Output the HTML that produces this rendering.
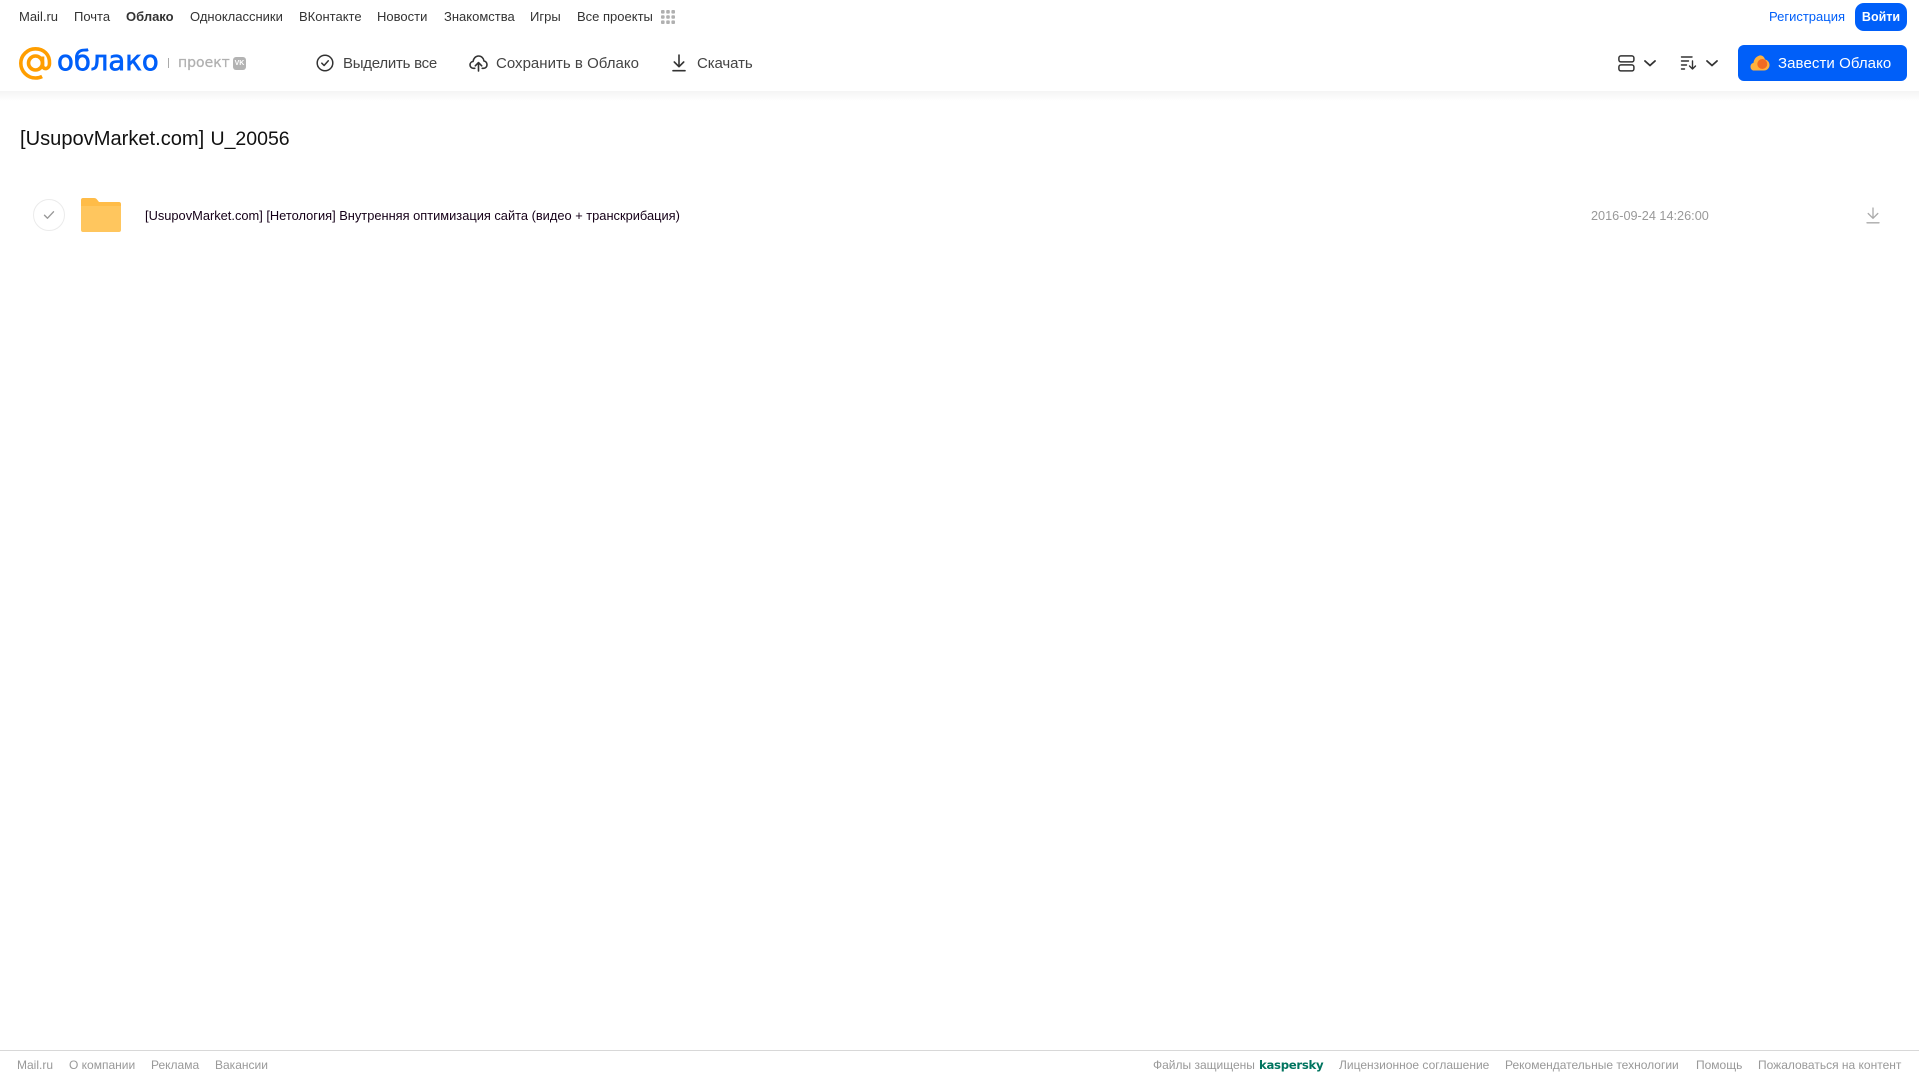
<!DOCTYPE html>
<html lang="ru"><head><meta charset="utf-8"><title>Облако</title>
<style>
html,body{margin:0;padding:0;background:#fff}
body{width:1919px;height:1079px;position:relative;overflow:hidden;font-family:"Liberation Sans",Arial,sans-serif}
.t{position:absolute;white-space:nowrap;line-height:20px}
.n{top:7px;font-size:13px;color:#333}
.b{top:54px;font-size:15px;color:#444}
.f{top:1055px;font-size:12px;color:#999}
svg{position:absolute;overflow:visible}
</style></head><body>
<div style="position:absolute;left:0;top:0;width:1919px;height:91px;background:#fff"></div>
<div style="position:absolute;left:0;top:91px;width:1919px;height:10px;background:linear-gradient(#f4f4f4,#fff)"></div>

<span class="t n" style="left:19px">Mail.ru</span>
<span class="t n" style="left:74px">Почта</span>
<span class="t n" style="left:126px;font-weight:bold">Облако</span>
<span class="t n" style="left:190px">Одноклассники</span>
<span class="t n" style="left:299px">ВКонтакте</span>
<span class="t n" style="left:377px">Новости</span>
<span class="t n" style="left:444px">Знакомства</span>
<span class="t n" style="left:530px">Игры</span>
<span class="t n" style="left:577px">Все проекты</span>
<svg style="left:661px;top:10px" width="14" height="14" fill="#b0b0b0"><rect x="0" y="0" width="3.6" height="3.6" rx="1"/><rect x="5.2" y="0" width="3.6" height="3.6" rx="1"/><rect x="10.4" y="0" width="3.6" height="3.6" rx="1"/><rect x="0" y="5.2" width="3.6" height="3.6" rx="1"/><rect x="5.2" y="5.2" width="3.6" height="3.6" rx="1"/><rect x="10.4" y="5.2" width="3.6" height="3.6" rx="1"/><rect x="0" y="10.4" width="3.6" height="3.6" rx="1"/><rect x="5.2" y="10.4" width="3.6" height="3.6" rx="1"/><rect x="10.4" y="10.4" width="3.6" height="3.6" rx="1"/></svg>

<span class="t n" style="left:1769px;color:#005ff9">Регистрация</span>
<div style="position:absolute;left:1855px;top:3px;width:52px;height:28px;border-radius:9px;background:#005ff9;color:#fff;font-size:12.5px;font-weight:bold;line-height:28px;text-align:center">Войти</div>

<svg style="left:19px;top:47px" width="33" height="33" viewBox="0 0 33 33" fill="none" stroke="#ff9e00" stroke-width="3.6"><circle cx="16.5" cy="16" r="7"/><path d="M23.5 9.5v8.5c0 5 6.800 5 7 -1.500C31 7.500 24.500 1.800 16.500 1.800 8.500 1.800 1.800 8.300 1.800 16.200c0 8 6.500 14.800 14.800 14.800 2.700 0 4.500-.5 6.500-1.500"/></svg>
<span class="t" style="left:57px;top:44px;line-height:34px;font-family:'DejaVu Sans',sans-serif;font-size:27.500px;color:#005ff9;-webkit-text-stroke:.7px #005ff9">облако</span>
<div style="position:absolute;left:168px;top:58px;width:1px;height:10px;background:#aaa"></div>
<span class="t" style="left:178px;top:53px;font-family:'DejaVu Sans',sans-serif;font-size:14px;color:#b0b0b0;-webkit-text-stroke:.25px #b0b0b0">проект</span>
<div style="position:absolute;left:233px;top:57px;width:13px;height:13px;border-radius:3px;background:#b3b3b3;color:#fff;font-size:7px;font-weight:bold;line-height:13px;text-align:center">VK</div>

<svg style="left:316px;top:54px" width="18" height="18" fill="none" stroke="#333" stroke-width="1.500" stroke-linecap="round" stroke-linejoin="round"><circle cx="9" cy="9" r="7.800"/><path d="M5.800 9.200l2.300 2.300 4.200-4.700"/></svg>
<span class="t b" style="left:343px;letter-spacing:-.25px">Выделить все</span>

<svg style="left:469px;top:54px" width="19" height="18" fill="none" stroke="#333" stroke-width="1.600" stroke-linecap="round" stroke-linejoin="round"><path d="M5.800 14.300H4.500C2.500 14.300 1 12.800 1 10.900c0-1.800 1.300-3.200 3-3.400C4.500 4.300 6.700 2 9.500 2c2.900 0 5.100 2.200 5.500 5 1.800.3 3 1.800 3 3.800 0 2-1.500 3.500-3.500 3.500h-1.300"/><path d="M9.500 17V9M6.300 11.800l3.200-3.200 3.200 3.200"/></svg>
<span class="t b" style="left:496px;letter-spacing:.02px">Сохранить в Облако</span>

<svg style="left:672px;top:54px" width="14" height="18" fill="none" stroke="#333" stroke-width="1.600" stroke-linecap="round" stroke-linejoin="round"><path d="M7 1v11.500M2.300 8l4.700 4.700L11.700 8"/><path d="M1 16.700h12"/></svg>
<span class="t b" style="left:697px;letter-spacing:-.1px">Скачать</span>

<svg style="left:1618px;top:55px" width="17" height="17" fill="none" stroke="#333" stroke-width="1.500"><rect x=".9" y=".9" width="15" height="6" rx="2"/><rect x=".9" y="9.900" width="15" height="6" rx="2"/></svg>
<svg style="left:1644px;top:60px" width="12" height="7" fill="none" stroke="#333" stroke-width="1.800" stroke-linecap="round" stroke-linejoin="round"><path d="M1 1l5 4.500L11 1"/></svg>
<svg style="left:1681px;top:56px" width="16" height="14" fill="none" stroke="#333" stroke-width="1.400" stroke-linecap="round" stroke-linejoin="round"><path d="M.5 1h10.500M.5 5h7M.5 9h5M.5 13h3"/><path d="M11.500 5v8M8.500 10l3 3 3-3"/></svg>
<svg style="left:1706px;top:60px" width="12" height="7" fill="none" stroke="#333" stroke-width="1.800" stroke-linecap="round" stroke-linejoin="round"><path d="M1 1l5 4.500L11 1"/></svg>

<div style="position:absolute;left:1738px;top:45px;width:169px;height:36px;border-radius:6px;background:#005ff9"></div>
<svg style="left:1750px;top:54px" width="20" height="17"><path d="M4 16.500C1.800 16.500 .5 14.700.5 12.700c0-2 1.300-3.500 3-3.800C3.800 5.500 6 2.500 9.500 1.500c2.500-.7 5 1.500 5.500 4 2.500.5 4.500 2.700 4.500 5.500 0 3-2.300 5.500-5.500 5.500z" fill="#ffb13d"/><circle cx="12.300" cy="10" r="5" fill="#f26b22"/></svg>
<span class="t" style="left:1778px;top:54px;font-size:15px;color:#fff;letter-spacing:.08px">Завести Облако</span>

<span class="t" style="left:20px;top:126px;line-height:26px;font-size:20.100px;color:#111">[UsupovMarket.com]</span>
<span class="t" style="left:210.500px;top:126px;line-height:26px;font-size:19.500px;color:#111">U_20056</span>

<div style="position:absolute;left:33px;top:199px;width:30px;height:30px;border:1px solid #ebebeb;border-radius:50%"></div>
<svg style="left:43px;top:210px" width="12" height="10" fill="none" stroke="#999" stroke-width="1.400" stroke-linecap="round" stroke-linejoin="round"><path d="M1.500 5.200l3 3L10.500 1.800"/></svg>
<svg style="left:81px;top:198px" width="40" height="34" viewBox="0 0 40 34"><path d="M2 0h11c1.500 0 2.300.6 3 1.500L18 4h20c1.200 0 2 .8 2 2v12H0V2C0 .8.800 0 2 0z" fill="#ffbc48"/><path d="M0 8h40v24c0 1.200-.8 2-2 2H2c-1.200 0-2-.8-2-2z" fill="#ffc65e"/></svg>
<span class="t" style="left:145px;top:206px;font-size:12.850px;color:#150018">[UsupovMarket.com] [Нетология] Внутренняя оптимизация сайта (видео + транскрибация)</span>
<span class="t" style="left:1591px;top:206px;font-size:12.700px;color:#999">2016-09-24 14:26:00</span>
<svg style="left:1866px;top:207px" width="14" height="17" fill="none" stroke="#aaa" stroke-width="1.300" stroke-linecap="round" stroke-linejoin="round"><path d="M7 1v10M2.200 6.500L7 11.300l4.800-4.800"/><path d="M1 15.800h12"/></svg>

<div style="position:absolute;left:0;top:1050px;width:1919px;height:1px;background:#d8d8d8"></div>
<span class="t f" style="left:17px">Mail.ru</span>
<span class="t f" style="left:69px">О компании</span>
<span class="t f" style="left:151px">Реклама</span>
<span class="t f" style="left:215px">Вакансии</span>
<span class="t f" style="left:1153px">Файлы защищены</span>
<span class="t" style="left:1259px;top:1055px;font-family:'DejaVu Sans',sans-serif;font-size:11.700px;font-weight:bold;color:#00745f;letter-spacing:-.3px">kaspersky</span>
<span class="t f" style="left:1339px">Лицензионное соглашение</span>
<span class="t f" style="left:1505px">Рекомендательные технологии</span>
<span class="t f" style="left:1696px">Помощь</span>
<span class="t f" style="left:1758px">Пожаловаться на контент</span>
</body></html>
